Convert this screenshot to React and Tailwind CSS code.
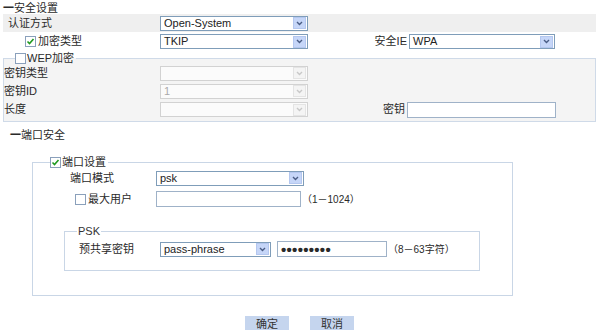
const font = { fontFamily: '"Liberation Sans", "Noto Sans CJK SC", sans-serif' }

function Check({ checked }) {
  return (
    <svg width="11" height="11" viewBox="0 0 11 11" className="shrink-0">
      <rect x="0.5" y="0.5" width="10" height="10" fill="#fff" stroke="#8aa0bb" />
      {checked && (
        <path d="M2.5 5.5 L4.5 7.5 L8.5 3" fill="none" stroke="#1f9a1f" strokeWidth="1.6" />
      )}
    </svg>
  )
}

function Arrow({ disabled }) {
  return (
    <div
      className={
        'w-[13px] h-[12px] flex items-center justify-center border ' +
        (disabled ? 'bg-[#f4f4f4] border-[#e4e4e4]' : 'bg-[#c6d6f8] border-[#b4c7ef]')
      }
    >
      <svg width="7" height="5" viewBox="0 0 7 5">
        <path d="M1 1 L3.5 3.5 L6 1" fill="none" stroke={disabled ? '#c8c8c8' : '#4a5d85'} strokeWidth="1.4" />
      </svg>
    </div>
  )
}

function Select({ value, width, disabled }) {
  return (
    <div
      className={
        'h-[15px] flex items-center justify-between pl-[3px] pr-[1px] border text-[11px] ' +
        (disabled ? 'border-[#d2d2d2] bg-[#fbfbfb] text-[#aaa]' : 'border-[#7f9db9] bg-white text-[#222]')
      }
      style={{ width }}
    >
      <span className="leading-none">{value}</span>
      <Arrow disabled={disabled} />
    </div>
  )
}

function Input({ width, children }) {
  return (
    <div
      className="h-[16px] border border-[#9fb2c8] bg-white flex items-center pl-[3px]"
      style={{ width }}
    >
      {children}
    </div>
  )
}

function Button({ children }) {
  return (
    <div className="w-[44px] h-[16px] bg-[#c5d5ee] flex items-center justify-center text-[11px] text-[#333]">
      {children}
    </div>
  )
}

export default function App() {
  return (
    <div className="w-[599px] h-[330px] bg-white overflow-hidden text-[11px] text-[#2a2a2a]" style={font}>
      <div className="h-[14px] flex items-center pl-[3px] pt-[2px]">
        <span className="font-bold">一</span>安全设置
      </div>

      <div className="mx-[3px] h-[18px] bg-[#efefef] flex items-center">
        <div className="w-[157px] pl-[5px]">认证方式</div>
        <Select value="Open-System" width={148} />
      </div>

      <div className="mx-[3px] h-[19px] flex items-center">
        <div className="w-[157px] pl-[22px] flex items-center gap-[2px]">
          <Check checked />
          <span>加密类型</span>
        </div>
        <Select value="TKIP" width={148} />
        <div className="w-[101px] text-right pr-[2px]">安全IE</div>
        <Select value="WPA" width={146} />
      </div>

      <fieldset className="mx-[3px] mt-[1px] border border-[#cfdae8] bg-[#f4f4f4] pb-[2px]">
        <legend className="ml-[11px] pr-[2px] flex items-center gap-[1px] h-[12px]">
          <Check />
          <span>WEP加密</span>
        </legend>
        <div className="h-[18px] flex items-center">
          <div className="w-[156px]">密钥类型</div>
          <Select value="" width={148} disabled />
        </div>
        <div className="h-[18px] flex items-center">
          <div className="w-[156px]">密钥ID</div>
          <Select value="1" width={148} disabled />
        </div>
        <div className="h-[19px] flex items-center">
          <div className="w-[156px]">长度</div>
          <Select value="" width={148} disabled />
          <div className="w-[99px] text-right pr-[2px]">密钥</div>
          <Input width={149} />
        </div>
      </fieldset>

      <div className="h-[26px] flex items-center pl-[10px]">
        <span className="font-bold">一</span>端口安全
      </div>

      <fieldset className="ml-[32px] mt-[8px] w-[481px] border border-[#c9d6e6] pb-[24px]">
        <legend className="ml-[17px] pr-[2px] flex items-center gap-[1px] h-[12px]">
          <Check checked />
          <span>端口设置</span>
        </legend>
        <div className="h-[20px] flex items-center">
          <div className="w-[123px] pl-[37px]">端口模式</div>
          <Select value="psk" width={148} />
        </div>
        <div className="h-[22px] flex items-center">
          <div className="w-[123px] pl-[42px] flex items-center gap-[2px]">
            <Check />
            <span>最大用户</span>
          </div>
          <Input width={145} />
          <span className="ml-[1px] text-[10px]">（1－1024）</span>
        </div>

        <fieldset className="ml-[31px] mt-[15px] w-[416px] border border-[#c9d6e6] pb-[9px]">
          <legend className="ml-[12px] px-[1px] h-[12px] flex items-center text-[#333]">PSK</legend>
          <div className="h-[24px] flex items-center">
            <div className="w-[95px] pl-[14px]">预共享密钥</div>
            <Select value="pass-phrase" width={111} />
            <div className="ml-[6px]">
              <Input width={110}>
                <span className="text-[15px] leading-none font-bold tracking-[0.3px]">•••••••••</span>
              </Input>
            </div>
            <span className="ml-[1px] text-[10px]">（8－63字符）</span>
          </div>
        </fieldset>
      </fieldset>

      <div className="mt-[20px] flex justify-center gap-[21px]">
        <Button>确定</Button>
        <Button>取消</Button>
      </div>
    </div>
  )
}
